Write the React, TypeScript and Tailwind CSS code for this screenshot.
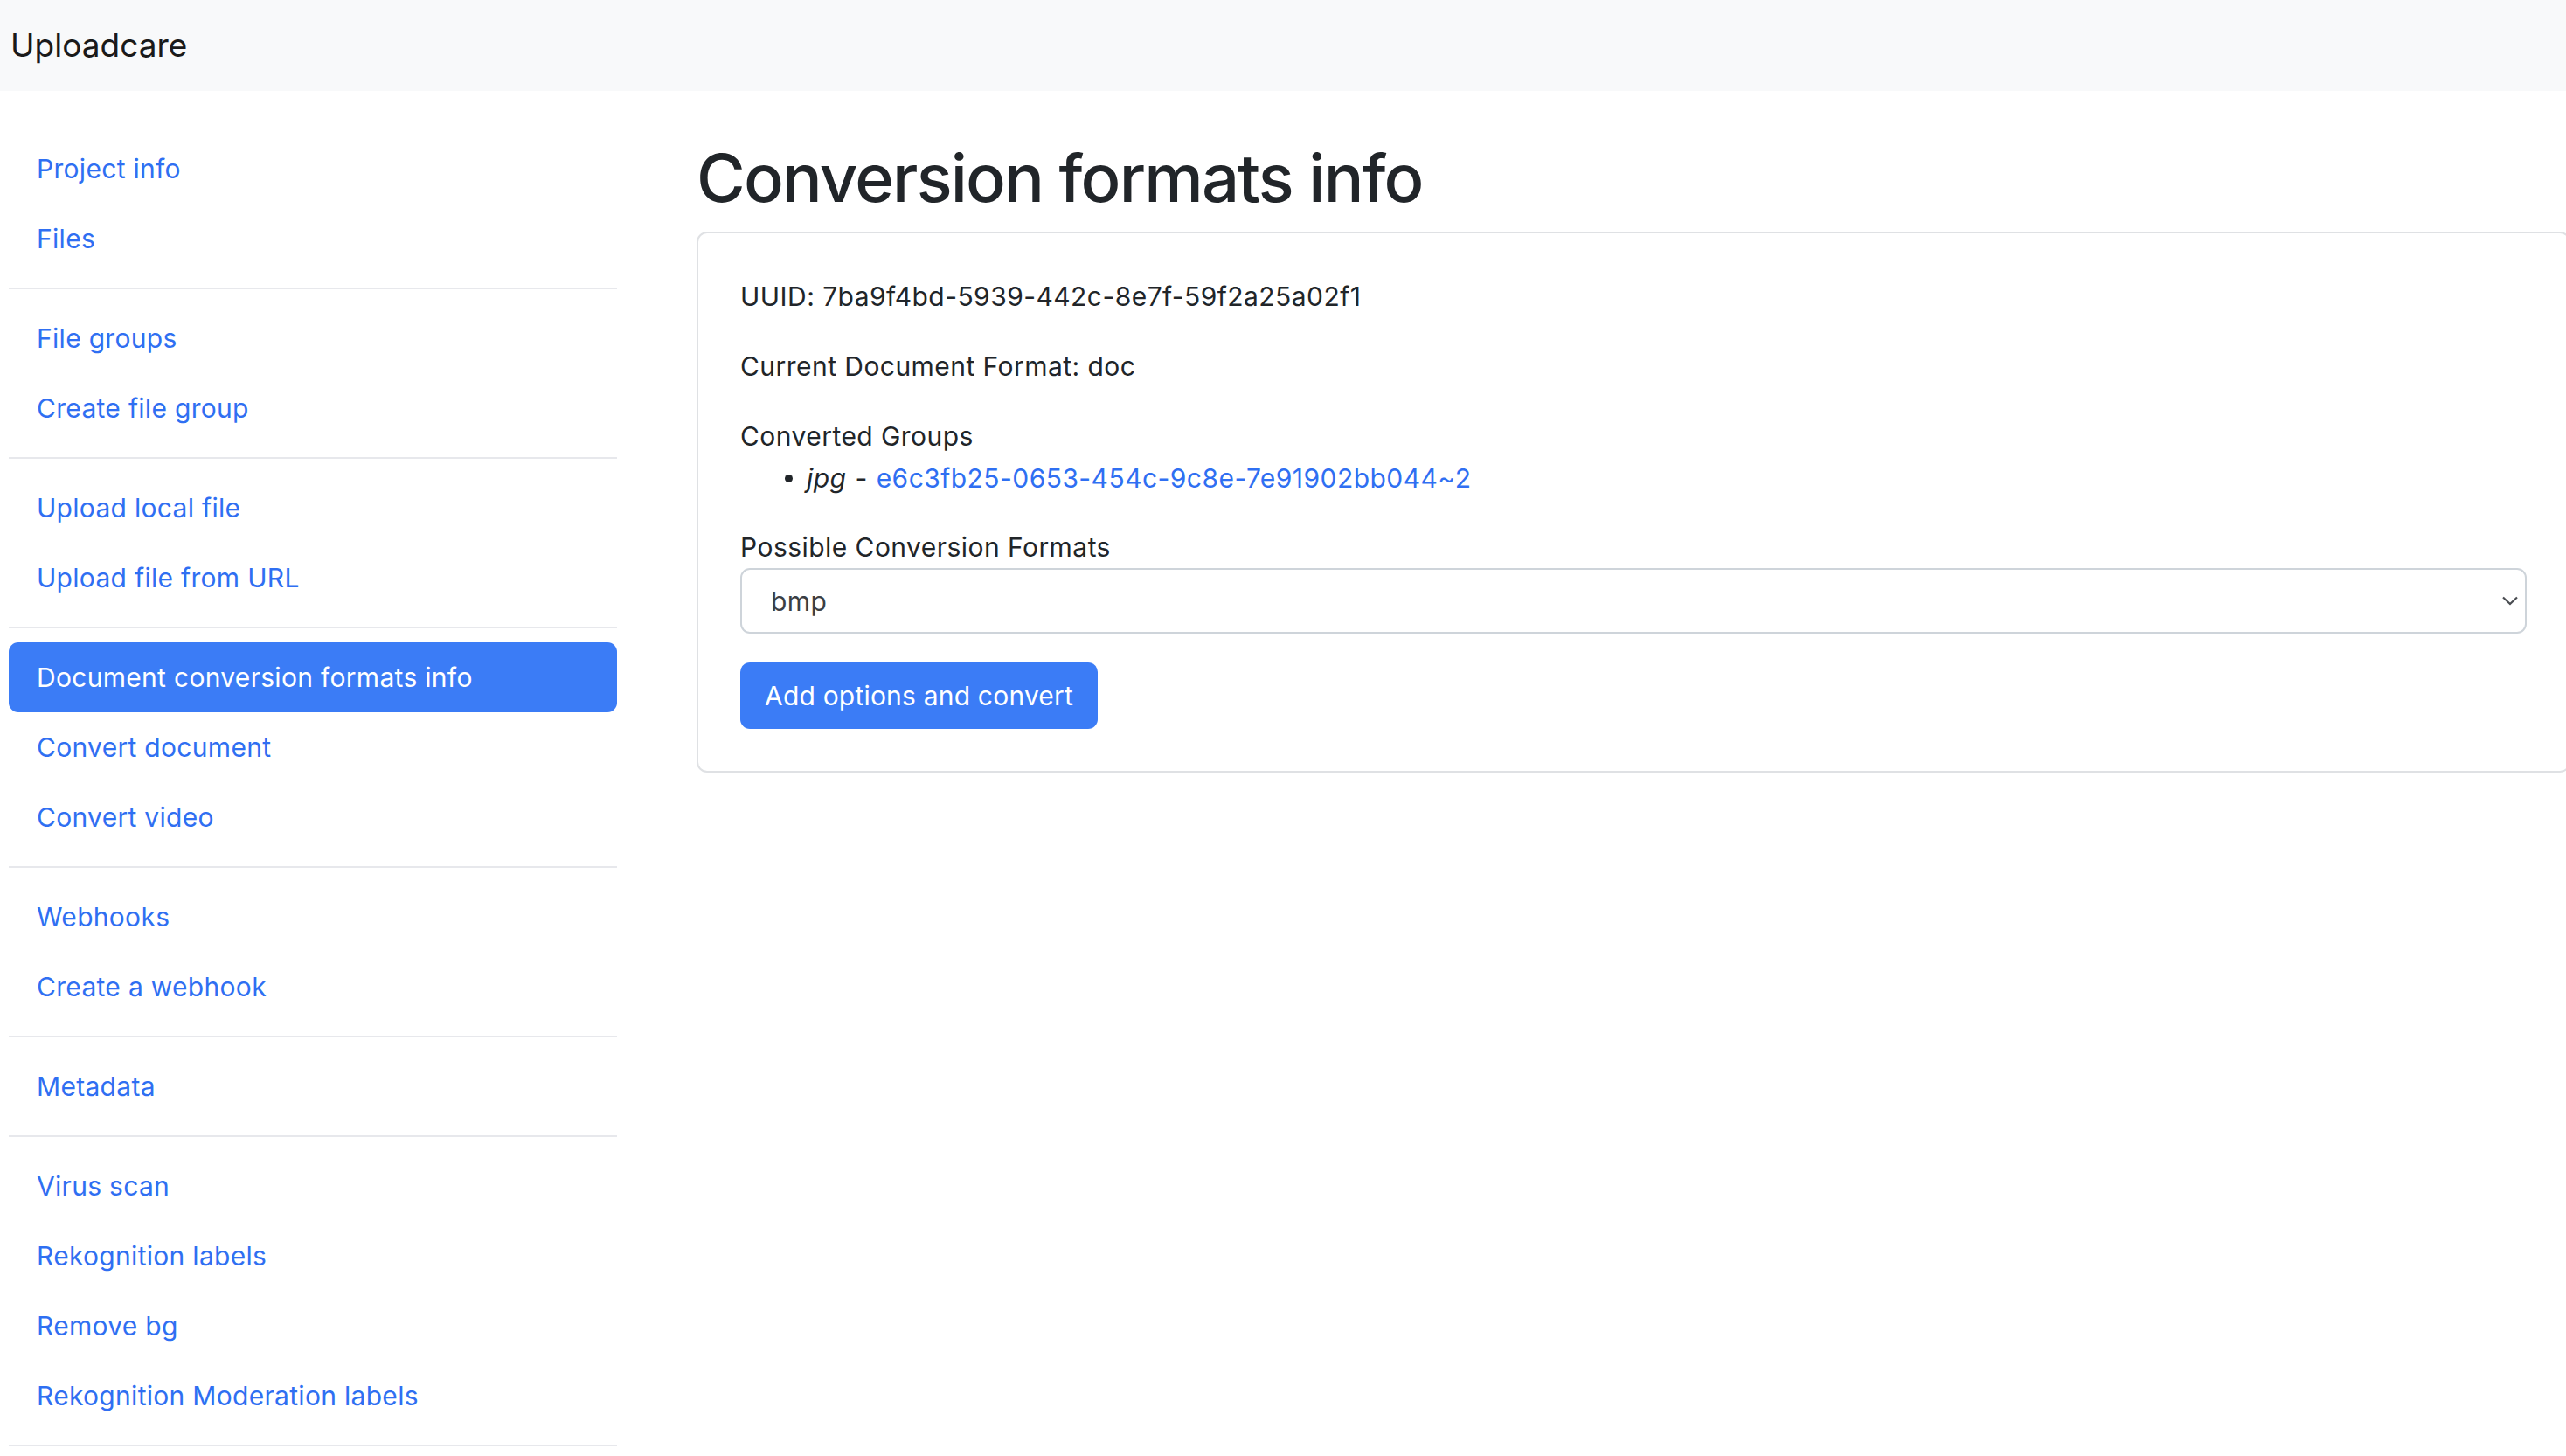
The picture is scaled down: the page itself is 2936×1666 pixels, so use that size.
import React from "react";

type Item = { label: string; active?: boolean };

const groups: Item[][] = [
  [{ label: "Project info" }, { label: "Files" }],
  [{ label: "File groups" }, { label: "Create file group" }],
  [{ label: "Upload local file" }, { label: "Upload file from URL" }],
  [
    { label: "Document conversion formats info", active: true },
    { label: "Convert document" },
    { label: "Convert video" },
  ],
  [{ label: "Webhooks" }, { label: "Create a webhook" }],
  [{ label: "Metadata" }],
  [
    { label: "Virus scan" },
    { label: "Rekognition labels" },
    { label: "Remove bg" },
    { label: "Rekognition Moderation labels" },
  ],
];

function Sidebar() {
  return (
    <aside className="ml-[10px] w-[696px] shrink-0 pt-[49px]">
      {groups.map((g, gi) => (
        <div key={gi}>
          {g.map((it) =>
            it.active ? (
              <a
                key={it.label}
                className="flex h-[80px] items-center rounded-[11px] bg-[#3b7cf6] pl-[32px] text-[30px] tracking-[0.3px] text-white"
              >
                {it.label}
              </a>
            ) : (
              <a
                key={it.label}
                className="flex h-[80px] items-center pl-[32px] text-[30px] tracking-[0.3px] text-[#2f6ff2]"
              >
                {it.label}
              </a>
            )
          )}
          <div className="my-[16px] h-[2px] bg-[#e7e8ec]" />
        </div>
      ))}
    </aside>
  );
}

function Main() {
  return (
    <main className="ml-[91px] w-[2144px] shrink-0">
      <h1 className="mt-[54px] text-[76px] font-medium leading-[91px] tracking-[-1.8px] text-[#212529]">
        Conversion formats info
      </h1>
      <div className="mt-[16px] rounded-[12px] border-2 border-[#dfe1e4] p-[48px] text-[30px] leading-[48px] tracking-[0.45px] text-[#212529]">
        <p className="mb-[32px]">UUID: 7ba9f4bd-5939-442c-8e7f-59f2a25a02f1</p>
        <p className="mb-[32px]">Current Document Format: doc</p>
        <div>Converted Groups</div>
        <ul className="mb-[31px] pl-[51px]">
          <li className="flex items-center">
            <span className="mr-[16px] inline-block h-[9px] w-[9px] rounded-full bg-[#212529]" />
            <em>jpg</em>
            <span className="mx-[10px]">-</span>
            <a className="text-[#2f6ff2]">e6c3fb25-0653-454c-9c8e-7e91902bb044~2</a>
          </li>
        </ul>
        <div>Possible Conversion Formats</div>
        <div className="flex h-[75px] items-center justify-between rounded-[11px] border-2 border-[#ced4da] pl-[33px] pr-[8px] text-[#3b3f44]">
          <span>bmp</span>
          <svg width="18" height="11" viewBox="0 0 18 11" fill="none">
            <path d="M1 1.5 L9 9 L17 1.5" stroke="#4a4d52" strokeWidth="2.2" />
          </svg>
        </div>
        <button className="mt-[33px] flex h-[76px] items-center rounded-[11px] bg-[#3b7cf6] px-[28px] text-[30px] tracking-[0.2px] text-white">
          Add options and convert
        </button>
      </div>
    </main>
  );
}

export default function App() {
  return (
    <div
      className="h-[1666px] w-[2936px] overflow-hidden bg-white"
      style={{ fontFamily: "Inter, 'Noto Sans', sans-serif" }}
    >
      <nav className="flex h-[104px] items-center bg-[#f8f9fa] pl-[12px]">
        <span className="text-[37px] text-[#1a1a1a]">Uploadcare</span>
      </nav>
      <div className="flex">
        <Sidebar />
        <Main />
      </div>
    </div>
  );
}
